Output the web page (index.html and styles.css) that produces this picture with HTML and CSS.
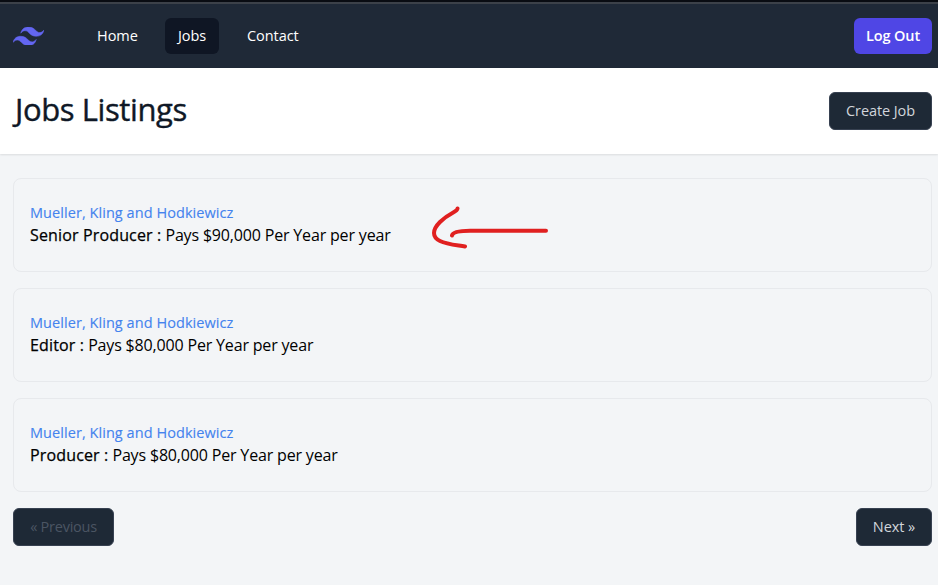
FILE: index.html
```html
<!DOCTYPE html>
<html lang="en">
<head>
<meta charset="utf-8">
<title>Jobs Listings</title>
<link rel="stylesheet" href="styles.css">
</head>
<body>
<nav class="nav">
  <svg class="logo" viewBox="0 0 24 14.4" aria-hidden="true"><path d="M12 0C8.8 0 6.8 1.6 6 4.8c1.2-1.6 2.6-2.2 4.2-1.8.913.228 1.565.89 2.288 1.624C13.666 5.818 15.027 7.2 18 7.2c3.2 0 5.2-1.6 6-4.8-1.2 1.6-2.6 2.2-4.2 1.8-.913-.228-1.565-.89-2.288-1.624C16.337 1.382 14.976 0 12 0zM6 7.2C2.8 7.2.8 8.8 0 12c1.2-1.6 2.6-2.2 4.2-1.8.913.228 1.565.89 2.288 1.624C7.666 13.018 9.027 14.4 12 14.4c3.2 0 5.2-1.6 6-4.8-1.2 1.6-2.6 2.2-4.2 1.8-.913-.228-1.565-.89-2.288-1.624C10.337 8.582 8.976 7.2 6 7.2z"/></svg>
  <div class="links">
    <a class="link home"><span>Home</span></a>
    <a class="link jobs active"><span>Jobs</span></a>
    <a class="link contact"><span>Contact</span></a>
  </div>
  <button class="logout"><span>Log Out</span></button>
</nav>
<header class="header">
  <h1><span>Jobs Listings</span></h1>
  <a class="btn create"><span>Create Job</span></a>
</header>
<main class="main">
  <a class="card">
    <div class="employer"><span>Mueller, Kling and Hodkiewicz</span></div>
    <div class="job"><strong>Senior Producer :</strong> <span>Pays $90,000 Per Year per year</span></div>
    <svg class="arrow" viewBox="0 0 120 44" aria-hidden="true"><path d="M27.5 3.5C27 7.500 20 7 10 17C2 25 2 32 10 36C17 39.500 26 40 35 41.500M22 30.500C23 26 33 25.700 40 25.700H116"/></svg>
  </a>
  <a class="card">
    <div class="employer"><span>Mueller, Kling and Hodkiewicz</span></div>
    <div class="job"><strong>Editor :</strong> <span>Pays $80,000 Per Year per year</span></div>
  </a>
  <a class="card">
    <div class="employer"><span>Mueller, Kling and Hodkiewicz</span></div>
    <div class="job"><strong>Producer :</strong> <span>Pays $80,000 Per Year per year</span></div>
  </a>
  <div class="pager">
    <span class="btn prev">« Previous</span>
    <a class="btn next">Next »</a>
  </div>
</main>
</body>
</html>
```
FILE: styles.css
```css
* { box-sizing: border-box; }
body {
  margin: 0;
  height: 585px;
  overflow: hidden;
  background: #f3f5f7;
  color: #000;
  font-family: "Open Sans", "Noto Sans", sans-serif;
  font-size: 14px;
  line-height: 20px;
}
.nav {
  height: 68px;
  border-top: 2px solid #090c12;
  box-shadow: inset 0 2px #3c4149;
  padding: 2px 6px 0 13px;
  display: flex;
  align-items: center;
  background: #1f2937;
}
.logo { width: 31px; height: 18.600px; fill: #6366f1; stroke: #6366f1; stroke-width: .4; }
.links { display: flex; gap: 16px; margin-left: 41px; flex: 1; }
.link {
  height: 36px;
  padding: 8px 12px;
  border-radius: 6px;
  color: #fff;
  font-size: 14.500px;
  letter-spacing: -0.050px;
  white-space: nowrap;
}
.active { background: #0f1624; }
.home { width: 64px; }
.jobs { width: 54px; padding-left: 13px; }
.contact { width: 78px; }
.logout {
  width: 78px;
  height: 36px;
  padding: 0 0 1px;
  border: 0;
  border-radius: 6px;
  background: #4f46e5;
  color: #fff;
  font: 600 14.500px/20px "Open Sans", sans-serif;
  letter-spacing: -0.100px;
}
.header {
  height: 86px;
  padding: 0 6px 0 13px;
  display: flex;
  align-items: center;
  justify-content: space-between;
  background: #fff;
  box-shadow: 0 1px 2px rgba(0, 0, 0, .1);
}
h1 {
  margin: -4px 0 0 2px;
  color: #0f1826;
  font-size: 31px;
  font-weight: 400;
  line-height: 36px;
  letter-spacing: -0.400px;
  -webkit-text-stroke: .4px #0f1826;
}
.btn {
  height: 38px;
  display: flex;
  align-items: center;
  justify-content: center;
  padding-bottom: 1px;
  border: 1px solid #374151;
  border-radius: 6px;
  background: #1e2936;
  color: #d1d5db;
  font-size: 14.500px;
  letter-spacing: -0.080px;
  white-space: nowrap;
}
.create { width: 103px; }
.main { padding: 24px 6px 0 13px; }
.card {
  position: relative;
  display: block;
  height: 94px;
  margin-bottom: 16px;
  padding: 24px 16px;
  border: 1px solid #e7e9ec;
  border-radius: 8px;
}
.employer {
  color: #4483ee;
  font-size: 14.500px;
  letter-spacing: 0.060px;
  -webkit-text-stroke: .12px #4483ee;
  white-space: nowrap;
}
.job { font-size: 16px; line-height: 24px; letter-spacing: -0.170px; white-space: nowrap; }
.job strong { font-weight: 400; letter-spacing: 0.150px; -webkit-text-stroke: .25px #000; }
.arrow {
  position: absolute;
  left: 416px;
  top: 26px;
  width: 120px;
  height: 44px;
  fill: none;
  stroke: #e02020;
  stroke-width: 4;
  stroke-linecap: round;
  stroke-linejoin: round;
}
.pager { display: flex; justify-content: space-between; }
.prev { width: 101px; color: #4b5563; letter-spacing: -0.250px; }
.next { width: 76px; }
```
